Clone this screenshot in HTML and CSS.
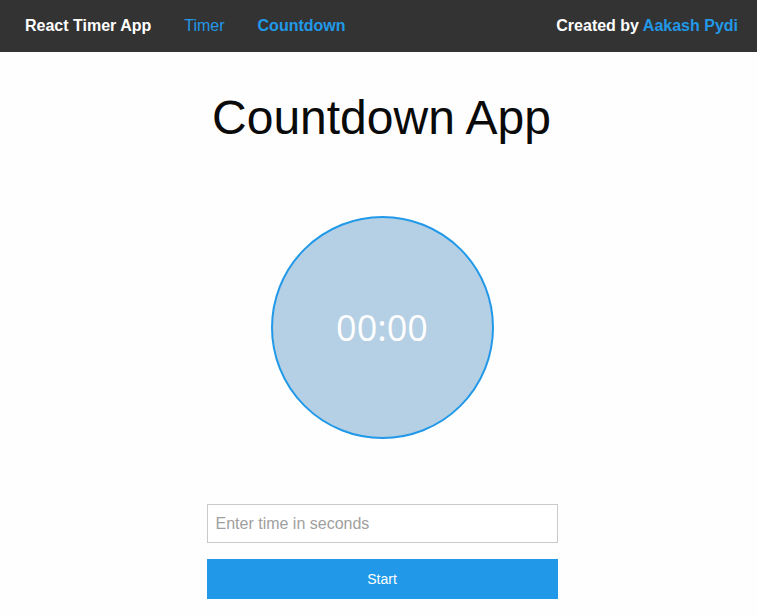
FILE: index.html
```html
<!DOCTYPE html>
<html>
<head>
<meta charset="utf-8">
<link rel="stylesheet" href="styles.css">
</head>
<body>
<header class="top-bar">
  <nav class="nav-left">
    <span class="brand">React Timer App</span>
    <a class="nav-link">Timer</a>
    <a class="nav-link active">Countdown</a>
  </nav>
  <div class="nav-right">Created by <a class="author">Aakash Pydi</a></div>
</header>
<main class="main">
  <h1 class="page-title">Countdown App</h1>
  <div class="clock"><span class="clock-text">00:00</span></div>
  <form class="countdown-form">
    <input class="time-input" type="text" placeholder="Enter time in seconds">
    <button class="start-btn" type="button">Start</button>
  </form>
</main>
</body>
</html>
```
FILE: styles.css
```css
html, body {
  margin: 0;
  padding: 0;
  background: #fefefe;
  font-family: "Liberation Sans", Arial, sans-serif;
  color: #0a0a0a;
}
.top-bar {
  height: 52px;
  background: #333333;
  display: flex;
  align-items: center;
  justify-content: space-between;
  padding: 0 19px 0 25px;
  box-sizing: border-box;
}
.nav-left {
  display: flex;
  align-items: center;
}
.brand {
  color: #fefefe;
  font-weight: bold;
  font-size: 16px;
  margin-right: 33px;
}
.nav-link {
  color: #2199e8;
  font-size: 16px;
  margin-right: 33px;
}
.nav-link.active {
  font-weight: bold;
}
.nav-right {
  color: #fefefe;
  font-weight: bold;
  font-size: 16px;
}
.author {
  color: #2199e8;
}
.main {
  display: flex;
  flex-direction: column;
  align-items: center;
  padding-left: 6px;
}
.page-title {
  font-weight: normal;
  font-size: 48px;
  line-height: 55px;
  margin: 38px 0 71px;
}
.clock {
  width: 223px;
  height: 223px;
  box-sizing: border-box;
  border: 2px solid #2199e8;
  border-radius: 50%;
  background: #b5d0e5;
  display: flex;
  align-items: center;
  justify-content: center;
  margin-left: 1px;
}
.clock-text {
  color: #fefefe;
  font-family: "Open Sans", "Noto Sans", sans-serif;
  font-size: 36px;
  font-weight: 400;
}
.countdown-form {
  margin-top: 65px;
  margin-left: 1px;
  width: 351px;
  display: flex;
  flex-direction: column;
}
.time-input {
  height: 39px;
  box-sizing: border-box;
  border: 1px solid #cacaca;
  padding: 0 8px;
  font-family: "Liberation Sans", Arial, sans-serif;
  font-size: 16px;
  color: #0a0a0a;
  margin: 0 0 16px;
}
.time-input::placeholder {
  color: #a0a0a0;
}
.start-btn {
  height: 40px;
  border: 0;
  background: #2199e8;
  color: #fefefe;
  font-family: "Liberation Sans", Arial, sans-serif;
  font-size: 14px;
}
```
